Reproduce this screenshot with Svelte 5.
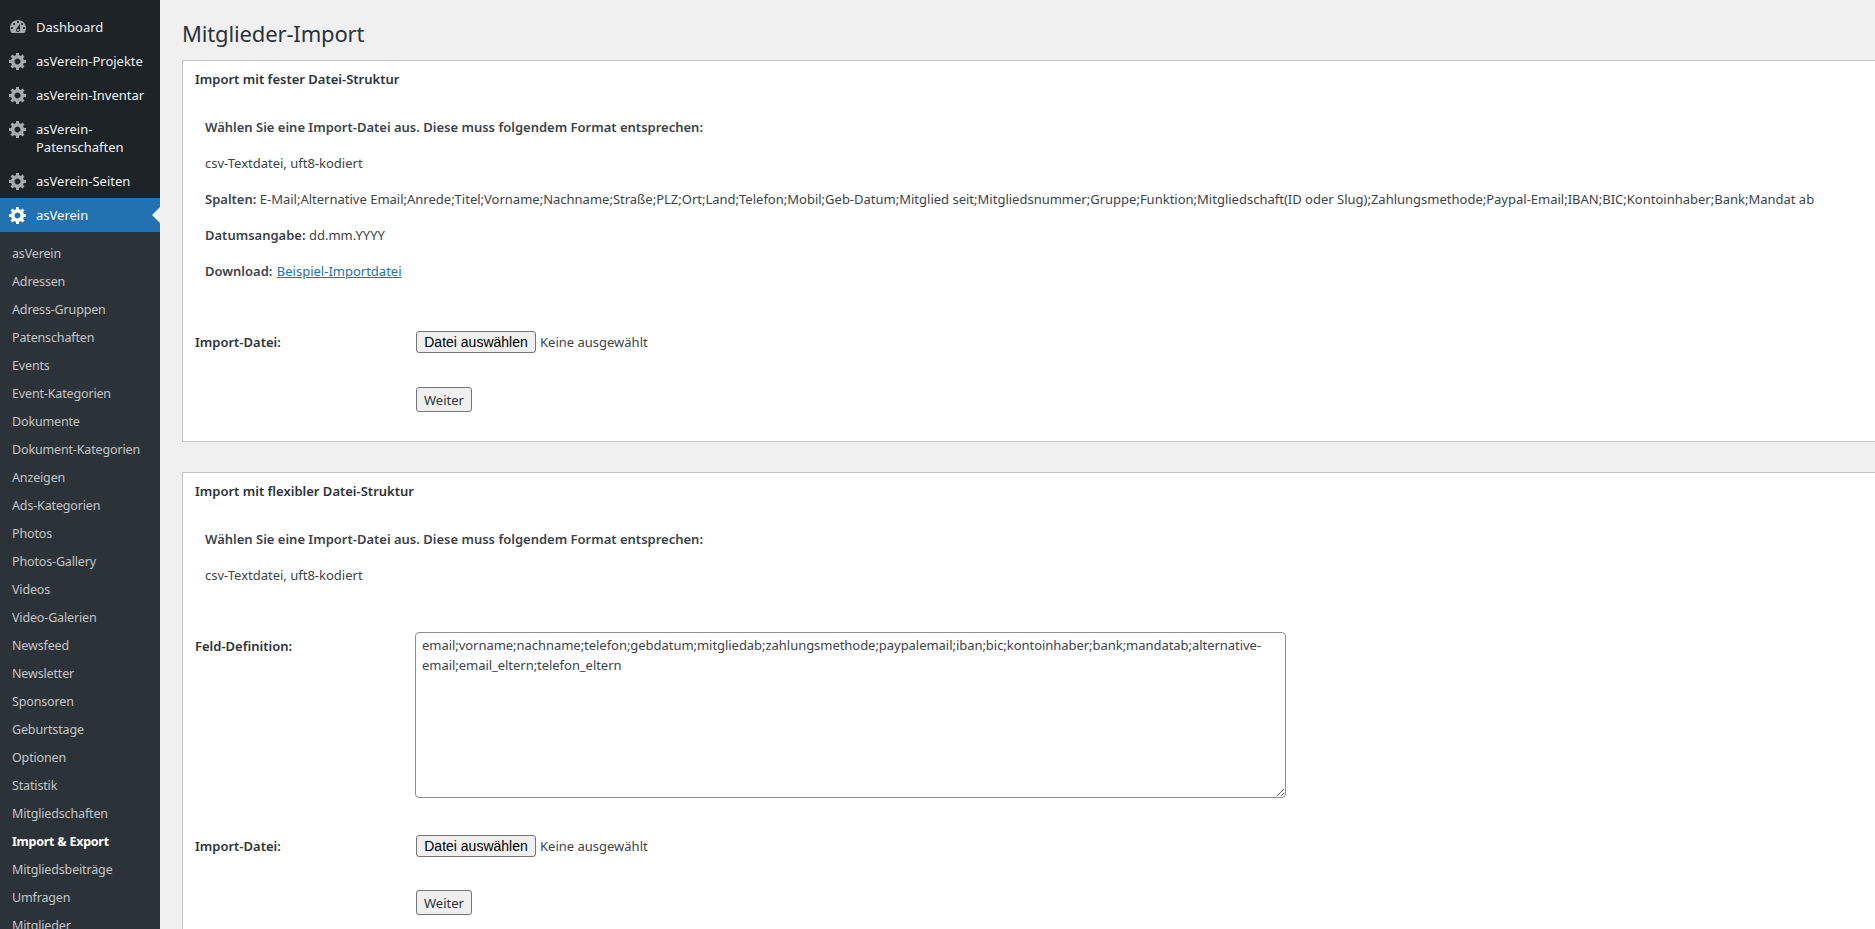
<script>
  const gear = "M18 12h-2.18c-.17.7-.44 1.35-.81 1.93l1.54 1.54-2.1 2.1-1.54-1.54c-.58.36-1.23.63-1.91.79V19H8v-2.18c-.68-.16-1.33-.43-1.91-.79l-1.54 1.54-2.12-2.12 1.54-1.54c-.36-.58-.63-1.23-.79-1.91H1V9.03h2.17c.16-.7.44-1.35.8-1.94L2.43 5.55l2.1-2.1 1.54 1.54c.58-.37 1.24-.64 1.93-.81V2h3v2.18c.68.16 1.33.43 1.91.79l1.54-1.54 2.12 2.12-1.54 1.54c.36.59.64 1.24.8 1.94H18V12zm-8.5 1.5c1.66 0 3-1.34 3-3s-1.34-3-3-3-3 1.34-3 3 1.34 3 3 3z";
  const dash = "M3.76 16h12.48c1.1-1.37 1.76-3.11 1.76-5 0-4.42-3.58-8-8-8s-8 3.58-8 8c0 1.89.66 3.63 1.76 5zM10 4c.55 0 1 .45 1 1s-.45 1-1 1-1-.45-1-1 .45-1 1-1zM6 6c.55 0 1 .45 1 1s-.45 1-1 1-1-.45-1-1 .45-1 1-1zm8 0c.55 0 1 .45 1 1s-.45 1-1 1-1-.45-1-1 .45-1 1-1zm-5.37 5.55L12 7v6c0 1.1-.9 2-2 2s-2-.9-2-2c0-.57.24-1.08.63-1.45zM4 10c.55 0 1 .45 1 1s-.45 1-1 1-1-.45-1-1 .45-1 1-1zm12 0c.55 0 1 .45 1 1s-.45 1-1 1-1-.45-1-1 .45-1 1-1zm-5 3c0-.55-.45-1-1-1s-1 .45-1 1 .45 1 1 1 1-.45 1-1z";
  const top = [
    { label: "Dashboard", icon: dash },
    { label: "asVerein-Projekte", icon: gear },
    { label: "asVerein-Inventar", icon: gear },
    { label: "asVerein-\nPatenschaften", icon: gear },
    { label: "asVerein-Seiten", icon: gear }
  ];
  const sub = ["asVerein","Adressen","Adress-Gruppen","Patenschaften","Events","Event-Kategorien","Dokumente","Dokument-Kategorien","Anzeigen","Ads-Kategorien","Photos","Photos-Gallery","Videos","Video-Galerien","Newsfeed","Newsletter","Sponsoren","Geburtstage","Optionen","Statistik","Mitgliedschaften","Import & Export","Mitgliedsbeiträge","Umfragen","Mitglieder"];
  const spalten = "E-Mail;Alternative Email;Anrede;Titel;Vorname;Nachname;Straße;PLZ;Ort;Land;Telefon;Mobil;Geb-Datum;Mitglied seit;Mitgliedsnummer;Gruppe;Funktion;Mitgliedschaft(ID oder Slug);Zahlungsmethode;Paypal-Email;IBAN;BIC;Kontoinhaber;Bank;Mandat ab";
  const felder = "email;vorname;nachname;telefon;gebdatum;mitgliedab;zahlungsmethode;paypalemail;iban;bic;kontoinhaber;bank;mandatab;alternative-email;email_eltern;telefon_eltern";
</script>

<div class="page">
  <nav class="side">
    <ul class="top">
      {#each top as t}
        <li class="item">
          <svg class="ico" viewBox="0 0 20 20"><path d={t.icon} /></svg>
          <span class="lbl">{t.label}</span>
        </li>
      {/each}
      <li class="item active">
        <svg class="ico" viewBox="0 0 20 20"><path d={gear} /></svg>
        <span class="lbl">asVerein</span>
      </li>
    </ul>
    <ul class="sub">
      {#each sub as s}
        <li class:cur={s === "Import & Export"}>{s}</li>
      {/each}
    </ul>
  </nav>

  <main class="main">
    <h1>Mitglieder-Import</h1>

    <section class="box first">
      <h2>Import mit fester Datei-Struktur</h2>
      <div class="info">
        <p><b>Wählen Sie eine Import-Datei aus. Diese muss folgendem Format entsprechen:</b></p>
        <p>csv-Textdatei, uft8-kodiert</p>
        <p><b>Spalten:</b> {spalten}</p>
        <p><b>Datumsangabe:</b> dd.mm.YYYY</p>
        <p><b>Download:</b> <a href="#x">Beispiel-Importdatei</a></p>
      </div>
      <div class="row file-row">
        <span class="label">Import-Datei:</span>
        <span class="file"><button class="pick" type="button">Datei auswählen</button><span class="none">Keine ausgewählt</span></span>
      </div>
      <div class="row submit-row">
        <span class="label"></span>
        <button class="go" type="button">Weiter</button>
      </div>
    </section>

    <section class="box">
      <h2>Import mit flexibler Datei-Struktur</h2>
      <div class="info short">
        <p><b>Wählen Sie eine Import-Datei aus. Diese muss folgendem Format entsprechen:</b></p>
        <p>csv-Textdatei, uft8-kodiert</p>
      </div>
      <div class="row area-row">
        <span class="label">Feld-Definition:</span>
        <textarea readonly value={felder}></textarea>
      </div>
      <div class="row file-row second">
        <span class="label">Import-Datei:</span>
        <span class="file"><button class="pick" type="button">Datei auswählen</button><span class="none">Keine ausgewählt</span></span>
      </div>
      <div class="row submit-row last">
        <span class="label"></span>
        <button class="go" type="button">Weiter</button>
      </div>
    </section>
  </main>
</div>

<style>
  :global(html), :global(body) { margin: 0; overflow: hidden; background: #f0f0f1; }
  .page {
    display: flex; height: 929px; overflow: hidden;
    font-family: "Noto Sans", "Open Sans", sans-serif;
    font-size: 13px; color: #3c434a; background: #f0f0f1;
  }
  ul { list-style: none; margin: 0; padding: 0; }
  .side { width: 160px; flex: none; background: #1d2327; }
  .top { padding-top: 10px; }
  .item {
    display: flex; align-items: flex-start; box-sizing: border-box;
    padding: 8px 0 8px 8px; color: #f0f0f1; font-size: 13px; line-height: 18px;
    position: relative;
  }
  .ico { width: 20px; height: 20px; flex: none; margin: -1px 0 -1px; fill: #a7aaad; }
  .lbl { margin-left: 8px; white-space: pre-line; }
  .active { background: #2271b1; color: #fff; }
  .active .ico { fill: #fff; }
  .active::after {
    content: ""; position: absolute; right: 0; top: 9px;
    border: 8px solid transparent; border-right-color: #f0f0f1; border-left: 0;
  }
  .sub { background: #2c3338; padding-top: 8px; height: 697px; box-sizing: border-box; overflow: hidden; }
  .sub li {
    height: 28px; line-height: 28px; padding-left: 12px;
    color: #c3c4c7; font-size: 12.5px; letter-spacing: -0.15px;
  }
  .sub li.cur { color: #fff; font-weight: 700; letter-spacing: -0.25px; }
  .main { flex: 1; min-width: 0; padding: 0 0 0 22px; overflow: hidden; }
  h1 {
    margin: 0; padding: 17px 0 0; font-size: 22px; line-height: 32px;
    font-weight: 400; color: #2c3338; height: 43px; letter-spacing: -0.15px;
  }
  .box {
    width: calc(100% + 20px); box-sizing: border-box; background: #fff;
    border: 1px solid #c3c4c7; margin-bottom: 30px; padding: 0 12px;
  }
  .box.first { height: 382px; }
  h2 {
    margin: 0; padding-top: 9px; font-size: 13px; line-height: 18px;
    font-weight: 600; color: #2c3338;
  }
  .info { padding: 30px 0 0 10px; }
  p { margin: 0 0 18px; line-height: 18px; white-space: nowrap; }
  b { font-weight: 600; }
  a { color: #2271b1; margin-left: 1px; }
  .row { display: flex; }
  .label { width: 221px; flex: none; font-weight: 600; color: #2c3338; }
  .file-row { margin-top: 51px; align-items: center; }
  .file { display: flex; align-items: center; }
  .pick {
    height: 22px; width: 120px; padding: 0; box-sizing: border-box;
    font: 14px "Liberation Sans", Arial, sans-serif; color: #000;
    background: #efefef; border: 1px solid #767676; border-radius: 3px;
  }
  .none { margin-left: 4px; }
  .submit-row { margin-top: 34px; }
  .go {
    height: 25px; width: 56px; padding: 0; box-sizing: border-box;
    font: 13px "Noto Sans", sans-serif; color: #2c3338;
    background: #efefef; border: 1px solid #767676; border-radius: 3px;
  }
  .area-row { margin-top: 48px; }
  .area-row .label { padding-top: 5px; }
  textarea {
    width: 871px; height: 166px; box-sizing: border-box; margin: 0 0 0 -1px;
    padding: 2px 6px; font: 13px/20px "Noto Sans", sans-serif; color: #3c434a;
    letter-spacing: -0.04px;
    background: #fff; border: 1px solid #8c8f94; border-radius: 4px; outline: none;
  }
  .second { margin-top: 37px; }
  .submit-row.last { margin-top: 33px; padding-bottom: 60px; }
</style>
